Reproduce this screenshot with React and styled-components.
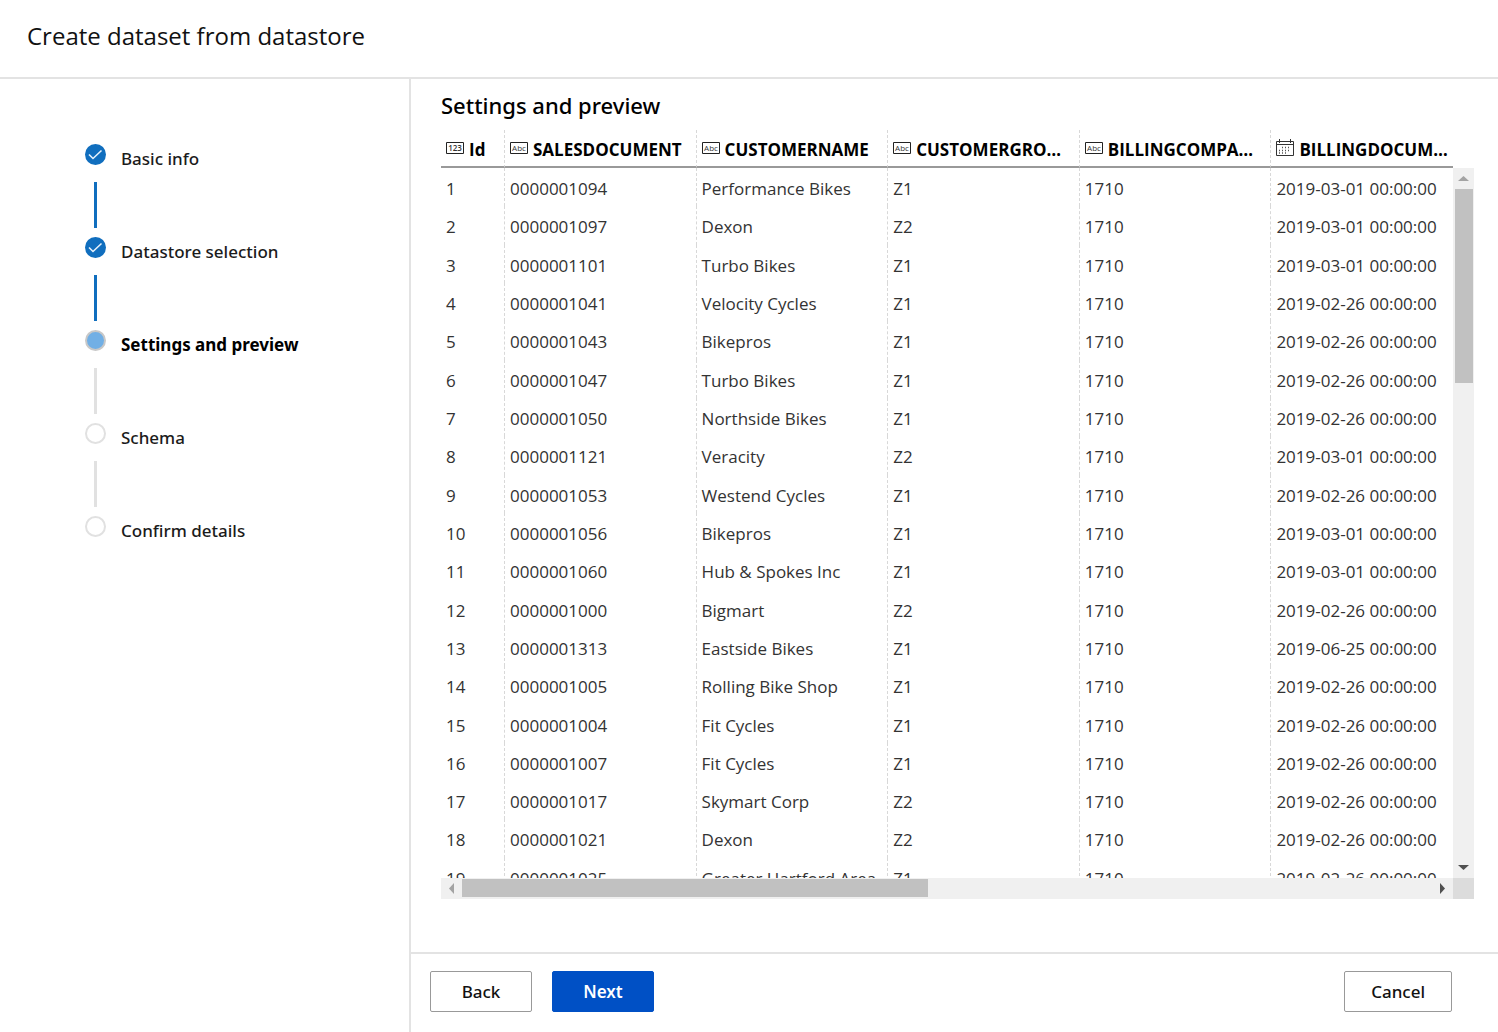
import React, { useRef } from "react";
import styled, { createGlobalStyle } from "styled-components";

const GlobalStyle = createGlobalStyle`
  *, *::before, *::after { box-sizing: border-box; }
  body {
    margin: 0;
    background: #fff;
    color: #111;
    font-family: "Open Sans", "Noto Sans", sans-serif;
    font-size: 17px;
    line-height: 24px;
  }
`;

const mediumFont = `"Noto Sans", "Open Sans", sans-serif`;

const Page = styled.div`
  height: 100vh;
  display: flex;
  flex-direction: column;
`;

const TopBar = styled.header`
  flex: none;
  padding: 20px 27px 25px;
  border-bottom: 2px solid #e3e3e3;
`;

const PageTitle = styled.h1`
  margin: 0;
  font-size: 24px;
  line-height: 32px;
  font-weight: 400;
`;

const Columns = styled.div`
  flex: 1;
  min-height: 0;
  display: flex;
`;

const Sidebar = styled.nav`
  flex: none;
  width: 411px;
  padding: 65px 24px 0 85px;
  border-right: 2px solid #e3e3e3;
`;

const StepList = styled.ol`
  margin: 0;
  padding: 0;
  list-style: none;
`;

const Step = styled.li`
  display: flex;
  gap: 15px;
  height: 93px;
`;

const StepTrack = styled.div`
  display: flex;
  flex-direction: column;
  align-items: center;
  gap: 17px;
  width: 21px;
`;

const StepDot = styled.span`
  flex: none;
  display: grid;
  place-items: center;
  width: 21px;
  height: 21px;
  border-radius: 50%;
  border: ${(p) => (p.$state === "done" ? "0" : "2px")} solid
    ${(p) => (p.$state === "current" ? "#c8c8c8" : "#e1e1e1")};
  background: ${(p) => ({ done: "#106ebe", current: "#71afe5", todo: "#fff" })[p.$state]};
`;

const StepLine = styled.span`
  width: 3px;
  height: 46px;
  background: ${(p) => (p.$done ? "#106ebe" : "#e1e1e1")};
`;

const StepLabel = styled.span`
  padding-top: 3px;
  font-family: ${mediumFont};
  font-weight: ${(p) => (p.$current ? 700 : 500)};
  color: ${(p) => (p.$current ? "#000" : "#1b1b1b")};
`;

const Main = styled.main`
  flex: 1;
  min-width: 0;
  display: flex;
  flex-direction: column;
`;

const Content = styled.section`
  flex: 1;
  min-height: 0;
  display: flex;
  flex-direction: column;
  padding: 10px 24px 53px 30px;
`;

const SectionTitle = styled.h2`
  margin: 0 0 9px;
  font-family: ${mediumFont};
  font-size: 22px;
  line-height: 32px;
  font-weight: 500;
  color: #000;
`;

const GridFrame = styled.div`
  flex: 1;
  min-height: 0;
  display: grid;
  grid-template: 38px minmax(0, 1fr) 21px / minmax(0, 1fr) 21px;
`;

const Viewport = styled.div`
  grid-row: 1 / 3;
  overflow: hidden;
`;

const Table = styled.table`
  width: 100%;
  min-width: 1022px;
  height: 766px;
  table-layout: fixed;
  border-collapse: separate;
  border-spacing: 0;
`;

const HeadCell = styled.th`
  position: sticky;
  top: 0;
  width: ${(p) => (p.$narrow ? "64px" : "auto")};
  height: 38px;
  padding: 3px 9px 0 5px;
  background: #fff;
  border-right: 1px dashed #d8d8d8;
  border-bottom: 2px solid #999;
  color: #000;
  font-weight: 700;
  text-align: left;
`;

const HeadContent = styled.span`
  display: flex;
  align-items: center;
  gap: 5px;
`;

const HeadName = styled.span`
  min-width: 0;
  overflow: hidden;
  text-overflow: ellipsis;
  white-space: nowrap;
`;

const Cell = styled.td`
  padding: 4px 5px 0;
  border-right: 1px dashed #d8d8d8;
  color: #333;
  white-space: nowrap;
`;

const TypeIcon = styled.svg`
  flex: none;
  display: block;
  margin-bottom: 3px;
`;

const ScrollBar = styled.div`
  display: flex;
  flex-direction: ${(p) => (p.$vertical ? "column" : "row")};
  grid-row: ${(p) => (p.$vertical ? 2 : 3)};
  grid-column: ${(p) => (p.$vertical ? 2 : 1)};
  background: #f0f0f0;
`;

const ScrollArrow = styled.button`
  flex: none;
  display: grid;
  place-items: center;
  width: 21px;
  height: 21px;
  padding: 0;
  border: 0;
  background: transparent;
`;

const ScrollTrack = styled.div`
  flex: 1;
  padding: ${(p) => (p.$vertical ? "0 1px 0 2px" : "1px 0 2px")};
`;

const ScrollThumb = styled.div`
  width: ${(p) => (p.$vertical ? "100%" : "48%")};
  height: ${(p) => (p.$vertical ? "29%" : "100%")};
  background: #c1c1c1;
`;

const ScrollCorner = styled.div`
  grid-row: 3;
  grid-column: 2;
  background: #dcdcdc;
`;

const Footer = styled.footer`
  flex: none;
  display: flex;
  gap: 20px;
  padding: 17px 46px 20px 19px;
  border-top: 2px solid #e3e3e3;
`;

const Button = styled.button`
  min-width: 102px;
  height: 41px;
  padding: 0 26px;
  border: 1px solid ${(p) => (p.$primary ? "#0050c5" : "#999")};
  border-radius: 2px;
  background: ${(p) => (p.$primary ? "#0050c5" : "#fff")};
  color: ${(p) => (p.$primary ? "#fff" : "#111")};
  font-family: ${mediumFont};
  font-size: 17px;
  line-height: 24px;
  font-weight: ${(p) => (p.$primary ? 600 : 500)};
`;

const Spacer = styled.div`
  flex: 1;
`;

const steps = [
  { label: "Basic info", state: "done" },
  { label: "Datastore selection", state: "done" },
  { label: "Settings and preview", state: "current" },
  { label: "Schema", state: "todo" },
  { label: "Confirm details", state: "todo" },
];

const columns = [
  { name: "Id", type: "123" },
  { name: "SALESDOCUMENT", type: "Abc" },
  { name: "CUSTOMERNAME", type: "Abc" },
  { name: "CUSTOMERGROUP", type: "Abc" },
  { name: "BILLINGCOMPANYCODE", type: "Abc" },
  { name: "BILLINGDOCUMENTDATE", type: "date" },
];

const rows = [
  ["0000001094", "Performance Bikes", "Z1", "2019-03-01"],
  ["0000001097", "Dexon", "Z2", "2019-03-01"],
  ["0000001101", "Turbo Bikes", "Z1", "2019-03-01"],
  ["0000001041", "Velocity Cycles", "Z1", "2019-02-26"],
  ["0000001043", "Bikepros", "Z1", "2019-02-26"],
  ["0000001047", "Turbo Bikes", "Z1", "2019-02-26"],
  ["0000001050", "Northside Bikes", "Z1", "2019-02-26"],
  ["0000001121", "Veracity", "Z2", "2019-03-01"],
  ["0000001053", "Westend Cycles", "Z1", "2019-02-26"],
  ["0000001056", "Bikepros", "Z1", "2019-03-01"],
  ["0000001060", "Hub & Spokes Inc", "Z1", "2019-03-01"],
  ["0000001000", "Bigmart", "Z2", "2019-02-26"],
  ["0000001313", "Eastside Bikes", "Z1", "2019-06-25"],
  ["0000001005", "Rolling Bike Shop", "Z1", "2019-02-26"],
  ["0000001004", "Fit Cycles", "Z1", "2019-02-26"],
  ["0000001007", "Fit Cycles", "Z1", "2019-02-26"],
  ["0000001017", "Skymart Corp", "Z2", "2019-02-26"],
  ["0000001021", "Dexon", "Z2", "2019-02-26"],
  ["0000001025", "Greater Hartford Area", "Z1", "2019-02-26"],
];

function ColumnIcon({ type }) {
  if (type === "date") {
    return (
      <TypeIcon width="18" height="18" viewBox="0 0 18 18" fill="none" stroke="#333" aria-hidden="true">
        <path d="M.5 2.5h17v14H.5zM.5 5.5h17M3.5 0v4M14.5 0v4" />
        <path d="M6 8.500h9M3 11.500h12M3 14h9" strokeWidth="1.500" strokeDasharray="1 2" stroke="#555" />
      </TypeIcon>
    );
  }
  return (
    <TypeIcon width="18" height="18" viewBox="0 0 18 18" aria-hidden="true">
      <path d="M.5 3.500h17v11H.5z" fill="none" stroke="#222" />
      <text x="9" y="12" textAnchor="middle" fontSize="8" fill="#333" fontWeight={type === "123" ? 600 : 400}>
        {type}
      </text>
    </TypeIcon>
  );
}

function Arrow({ label, d, color, onClick }) {
  return (
    <ScrollArrow type="button" aria-label={label} onClick={onClick}>
      <svg width="11" height="11" viewBox="0 0 11 11" aria-hidden="true">
        <path d={d} fill={color} />
      </svg>
    </ScrollArrow>
  );
}

export default function App() {
  const viewport = useRef(null);
  const scroll = (left, top) => () => viewport.current.scrollBy({ left, top });

  return (
    <Page>
      <GlobalStyle />
      <TopBar>
        <PageTitle>Create dataset from datastore</PageTitle>
      </TopBar>
      <Columns>
        <Sidebar aria-label="Steps">
          <StepList>
            {steps.map((step, i) => (
              <Step key={step.label} aria-current={step.state === "current" ? "step" : undefined}>
                <StepTrack>
                  <StepDot $state={step.state}>
                    {step.state === "done" && (
                      <svg width="15" height="15" viewBox="0 0 15 15" fill="none" stroke="#e6f1fb" strokeWidth="1.6" aria-hidden="true">
                        <path d="M1 7.500l4 4 8.500-8" />
                      </svg>
                    )}
                  </StepDot>
                  {i < steps.length - 1 && <StepLine $done={step.state === "done"} />}
                </StepTrack>
                <StepLabel $current={step.state === "current"}>{step.label}</StepLabel>
              </Step>
            ))}
          </StepList>
        </Sidebar>
        <Main>
          <Content>
            <SectionTitle>Settings and preview</SectionTitle>
            <GridFrame>
              <Viewport ref={viewport}>
                <Table>
                  <thead>
                    <tr>
                      {columns.map((column, i) => (
                        <HeadCell key={column.name} scope="col" $narrow={i === 0}>
                          <HeadContent>
                            <ColumnIcon type={column.type} />
                            <HeadName>{column.name}</HeadName>
                          </HeadContent>
                        </HeadCell>
                      ))}
                    </tr>
                  </thead>
                  <tbody>
                    {rows.map(([doc, name, group, date], i) => (
                      <tr key={doc}>
                        <Cell>{i + 1}</Cell>
                        <Cell>{doc}</Cell>
                        <Cell>{name}</Cell>
                        <Cell>{group}</Cell>
                        <Cell>1710</Cell>
                        <Cell>{date} 00:00:00</Cell>
                      </tr>
                    ))}
                  </tbody>
                </Table>
              </Viewport>
              <ScrollBar $vertical>
                <Arrow label="Scroll up" d="M0 8l5.500-5 5.500 5z" color="#a3a3a3" onClick={scroll(0, -38)} />
                <ScrollTrack $vertical>
                  <ScrollThumb $vertical />
                </ScrollTrack>
                <Arrow label="Scroll down" d="M0 3l5.500 5 5.500-5z" color="#505050" onClick={scroll(0, 38)} />
              </ScrollBar>
              <ScrollBar>
                <Arrow label="Scroll left" d="M8 0L3 5.500l5 5.500z" color="#a3a3a3" onClick={scroll(-38, 0)} />
                <ScrollTrack>
                  <ScrollThumb />
                </ScrollTrack>
                <Arrow label="Scroll right" d="M3 0l5 5.500L3 11z" color="#505050" onClick={scroll(38, 0)} />
              </ScrollBar>
              <ScrollCorner />
            </GridFrame>
          </Content>
          <Footer>
            <Button type="button">Back</Button>
            <Button type="button" $primary>Next</Button>
            <Spacer />
            <Button type="button">Cancel</Button>
          </Footer>
        </Main>
      </Columns>
    </Page>
  );
}
